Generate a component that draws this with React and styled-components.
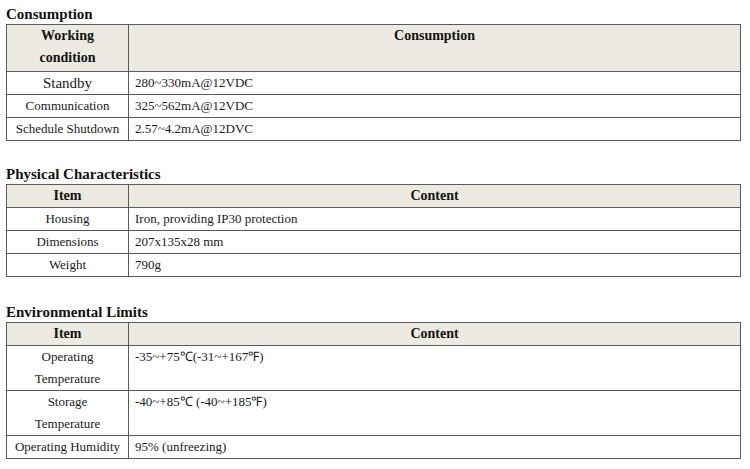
import React from 'react';
import styled, { createGlobalStyle } from 'styled-components';

const GlobalStyle = createGlobalStyle`
  body {
    margin: 0;
    background: #fff;
    font-family: "Liberation Serif", "Times New Roman", serif;
    color: #1a1a1a;
  }
`;

const Page = styled.div`
  padding: 5px 9px 0 6px;
  display: flex;
  flex-direction: column;
`;

const Section = styled.section`
  margin-bottom: ${(p) => p.gap || 25}px;
`;

const Title = styled.h2`
  margin: 0;
  font-size: 15px;
  line-height: 19px;
  font-weight: bold;
  color: #111;
`;

const Table = styled.table`
  width: 100%;
  border-collapse: collapse;
  border: 1.5px solid #5a5a5a;
  table-layout: fixed;
`;

const FirstCol = styled.col`
  width: 122px;
`;

const HeadCell = styled.th`
  background: #edebe1;
  font-size: 14px;
  font-weight: bold;
  line-height: 22px;
  text-align: center;
  vertical-align: top;
  padding: 0 4px ${(p) => p.extra || 0}px;
  border: 1.5px solid #5a5a5a;
  color: #111;
`;

const NameCell = styled.td`
  font-size: ${(p) => p.size || 13}px;
  line-height: 22px;
  text-align: center;
  vertical-align: ${(p) => (p.tall ? 'top' : 'middle')};
  padding: 0 2px;
  border: 1.5px solid #5a5a5a;
  white-space: nowrap;
`;

const ValueCell = styled.td`
  font-size: 13px;
  line-height: 22px;
  text-align: left;
  vertical-align: top;
  padding: 0 6px;
  border: 1.5px solid #5a5a5a;
`;

const SpecTable = ({ head, rows, extra }) => (
  <Table>
    <colgroup>
      <FirstCol />
      <col />
    </colgroup>
    <thead>
      <tr>
        <HeadCell extra={extra}>{head[0]}</HeadCell>
        <HeadCell extra={extra}>{head[1]}</HeadCell>
      </tr>
    </thead>
    <tbody>
      {rows.map((r, i) => (
        <tr key={i}>
          <NameCell size={r.size} tall={r.tall}>{r.name}</NameCell>
          <ValueCell>{r.value}</ValueCell>
        </tr>
      ))}
    </tbody>
  </Table>
);

const consumption = [
  { name: 'Standby', value: '280~330mA@12VDC', size: 15 },
  { name: 'Communication', value: '325~562mA@12VDC' },
  { name: 'Schedule Shutdown', value: '2.57~4.2mA@12DVC' },
];

const physical = [
  { name: 'Housing', value: 'Iron, providing IP30 protection' },
  { name: 'Dimensions', value: '207x135x28 mm' },
  { name: 'Weight', value: '790g' },
];

const environment = [
  { name: <>Operating<br />Temperature</>, value: '-35~+75℃(-31~+167℉)', tall: true },
  { name: <>Storage<br />Temperature</>, value: '-40~+85℃ (-40~+185℉)', tall: true },
  { name: 'Operating Humidity', value: '95% (unfreezing)' },
];

export default function App() {
  return (
    <>
      <GlobalStyle />
      <Page>
        <Section gap={24}>
          <Title>Consumption</Title>
          <SpecTable head={[<>Working<br />condition</>, 'Consumption']} rows={consumption} extra={2} />
        </Section>
        <Section gap={26}>
          <Title>Physical Characteristics</Title>
          <SpecTable head={['Item', 'Content']} rows={physical} />
        </Section>
        <Section gap={0}>
          <Title>Environmental Limits</Title>
          <SpecTable head={['Item', 'Content']} rows={environment} />
        </Section>
      </Page>
    </>
  );
}
